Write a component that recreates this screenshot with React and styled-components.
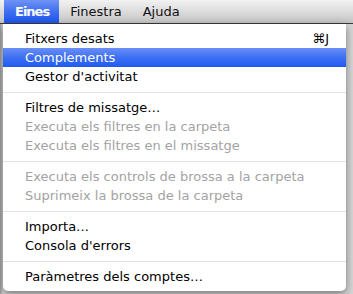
import React from 'react';
import styled, { createGlobalStyle } from 'styled-components';

//Global page styles
const GlobalStyle = createGlobalStyle`
  html, body {
    margin: 0;
    padding: 0;
    background: #d2d2d2;
    overflow: hidden;
  }
  body {
    font-family: "DejaVu Sans", "Liberation Sans", sans-serif;
    font-size: 13px;
    -webkit-font-smoothing: antialiased;
  }
`;

const menuItems = [
  { label: 'Fitxers desats', shortcut: '⌘J' },
  { label: 'Complements', active: true },
  { label: "Gestor d'activitat" },
  { separator: true },
  { label: 'Filtres de missatge…' },
  { label: 'Executa els filtres en la carpeta', disabled: true },
  { label: 'Executa els filtres en el missatge', disabled: true },
  { separator: true },
  { label: 'Executa els controls de brossa a la carpeta', disabled: true },
  { label: 'Suprimeix la brossa de la carpeta', disabled: true },
  { separator: true },
  { label: 'Importa…' },
  { label: "Consola d'errors" },
  { separator: true },
  { label: 'Paràmetres dels comptes…' },
];

//Main component
export default class App extends React.Component {
  render() {
    return (
      <StyledScreen>
        <GlobalStyle />
        <StyledMenuBar>
          <StyledBarItem $open>Eines</StyledBarItem>
          <StyledBarItem>Finestra</StyledBarItem>
          <StyledBarItem>Ajuda</StyledBarItem>
        </StyledMenuBar>
        <StyledDropdown>
          {menuItems.map((item, i) =>
            item.separator ? (
              <StyledSeparator key={i} />
            ) : (
              <StyledMenuItem key={i} $active={item.active} $disabled={item.disabled}>
                <span>{item.label}</span>
                {item.shortcut && <span className="shortcut">{item.shortcut}</span>}
              </StyledMenuItem>
            )
          )}
        </StyledDropdown>
      </StyledScreen>
    );
  }
}

const StyledScreen = styled.div`
  width: 353px;
  height: 294px;
  display: flex;
  flex-direction: column;
  background: linear-gradient(to right, #9a9a9a 0, #d6d6d6 3px, #d6d6d6 100%);
`;

const StyledMenuBar = styled.div`
  height: 23px;
  display: flex;
  align-items: stretch;
  padding-left: 4px;
  background: linear-gradient(#f2f2f2, #dcdcdc 50%, #c4c4c4);
  border-bottom: 1px solid #3a3a3a;
`;

const StyledBarItem = styled.div`
  padding: 0 10px 0 11px;
  line-height: 23px;
  color: ${(p) => (p.$open ? '#fff' : '#111')};
  font-weight: ${(p) => (p.$open ? 'bold' : 'normal')};
  letter-spacing: ${(p) => (p.$open ? '-1px' : '0')};
  background: ${(p) => (p.$open ? 'linear-gradient(#6f92f4, #3a6cf0 55%, #1f56ec)' : 'none')};
`;

const StyledDropdown = styled.div`
  margin-left: 3px;
  width: 343px;
  padding: 5px 0;
  background: #fff;
  border-radius: 0 0 5px 5px;
  box-shadow: 0 3px 9px rgba(0, 0, 0, 0.45);
  display: flex;
  flex-direction: column;
`;

const StyledMenuItem = styled.div`
  height: 19px;
  padding: 0 17px 0 22px;
  display: flex;
  align-items: center;
  justify-content: space-between;
  color: ${(p) => (p.$active ? '#fff' : p.$disabled ? '#a3a3a3' : '#000')};
  background: ${(p) => (p.$active ? 'linear-gradient(#6a8ef6, #3d6ff2 50%, #1f5bf0)' : 'transparent')};
  white-space: nowrap;
  .shortcut {
    font-size: 13px;
  }
`;

const StyledSeparator = styled.div`
  height: 1px;
  margin: 6px 0 5px;
  background: #e2e2e2;
`;
